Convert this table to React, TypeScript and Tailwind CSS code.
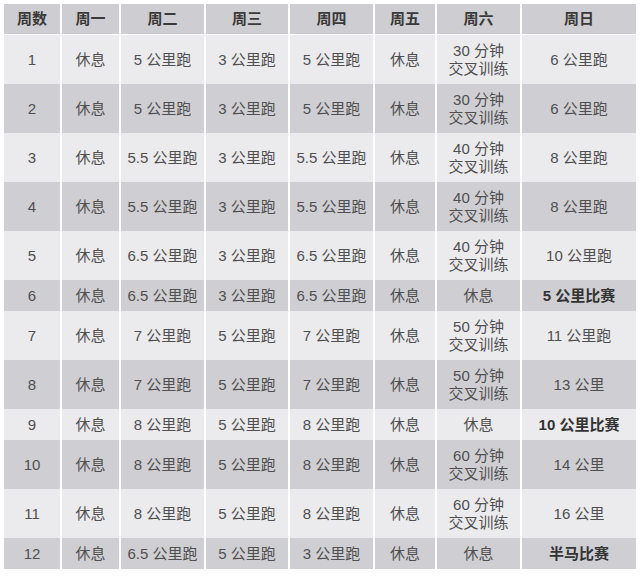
type Row = {
  cells: string[]
  tall: boolean
  bold?: boolean
}

const headers = ["周数", "周一", "周二", "周三", "周四", "周五", "周六", "周日"]

const rows: Row[] = [
  { cells: ["1", "休息", "5 公里跑", "3 公里跑", "5 公里跑", "休息", "30 分钟\n交叉训练", "6 公里跑"], tall: true },
  { cells: ["2", "休息", "5 公里跑", "3 公里跑", "5 公里跑", "休息", "30 分钟\n交叉训练", "6 公里跑"], tall: true },
  { cells: ["3", "休息", "5.5 公里跑", "3 公里跑", "5.5 公里跑", "休息", "40 分钟\n交叉训练", "8 公里跑"], tall: true },
  { cells: ["4", "休息", "5.5 公里跑", "3 公里跑", "5.5 公里跑", "休息", "40 分钟\n交叉训练", "8 公里跑"], tall: true },
  { cells: ["5", "休息", "6.5 公里跑", "3 公里跑", "6.5 公里跑", "休息", "40 分钟\n交叉训练", "10 公里跑"], tall: true },
  { cells: ["6", "休息", "6.5 公里跑", "3 公里跑", "6.5 公里跑", "休息", "休息", "5 公里比赛"], tall: false, bold: true },
  { cells: ["7", "休息", "7 公里跑", "5 公里跑", "7 公里跑", "休息", "50 分钟\n交叉训练", "11 公里跑"], tall: true },
  { cells: ["8", "休息", "7 公里跑", "5 公里跑", "7 公里跑", "休息", "50 分钟\n交叉训练", "13 公里"], tall: true },
  { cells: ["9", "休息", "8 公里跑", "5 公里跑", "8 公里跑", "休息", "休息", "10 公里比赛"], tall: false, bold: true },
  { cells: ["10", "休息", "8 公里跑", "5 公里跑", "8 公里跑", "休息", "60 分钟\n交叉训练", "14 公里"], tall: true },
  { cells: ["11", "休息", "8 公里跑", "5 公里跑", "8 公里跑", "休息", "60 分钟\n交叉训练", "16 公里"], tall: true },
  { cells: ["12", "休息", "6.5 公里跑", "5 公里跑", "3 公里跑", "休息", "休息", "半马比赛"], tall: false, bold: true },
]

const cols = "grid grid-cols-[56px_57px_83px_82px_83px_60px_83px_114px] gap-x-[2px]"

export default function App() {
  return (
    <div
      lang="zh-CN"
      className="w-[640px] h-[576px] bg-white pt-[4px] pl-[4px]"
      style={{ fontFamily: '"Liberation Sans", "Noto Sans CJK SC", sans-serif' }}
    >
      {/* Header */}
      <div className={`${cols} h-[30px] mb-[1px]`}>
        {headers.map((h) => (
          <div
            key={h}
            className="bg-[#cecdd1] flex items-center justify-center text-[15px] font-bold text-[#3a3a3a]"
          >
            {h}
          </div>
        ))}
      </div>

      {rows.map((row, i) => {
        const bg = i % 2 === 0 ? "bg-[#ebeaed]" : "bg-[#cfced2]"
        return (
          <div key={i} className={`${cols} ${row.tall ? "h-[49px]" : "h-[31px]"}`}>
            {row.cells.map((c, j) => {
              const strong = row.bold && j === 7
              return (
                <div
                  key={j}
                  className={`${bg} flex items-center justify-center text-center whitespace-pre-line text-[15px] leading-[18px] ${
                    strong ? "font-bold text-[#333333]" : "text-[#505050]"
                  }`}
                >
                  {c}
                </div>
              )
            })}
          </div>
        )
      })}
    </div>
  )
}
